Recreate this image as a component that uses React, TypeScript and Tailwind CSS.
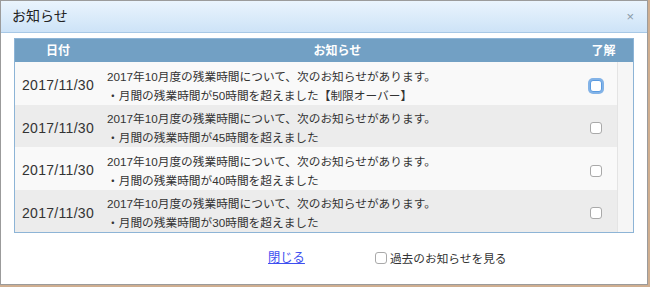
import { useState } from 'react'

const rows = [
  { date: '2017/11/30', hours: '50', extra: '【制限オーバー】' },
  { date: '2017/11/30', hours: '45', extra: '' },
  { date: '2017/11/30', hours: '40', extra: '' },
  { date: '2017/11/30', hours: '30', extra: '' },
]

const font = { fontFamily: '"Liberation Sans", "Noto Sans CJK JP", sans-serif' }

function Check({ focused }: { focused?: boolean }) {
  return (
    <span
      className={`inline-block w-[12px] h-[12px] rounded-[3px] bg-white border ${
        focused ? 'border-[#5b9be0] shadow-[0_0_0_2px_rgba(91,155,224,0.75)]' : 'border-[#a9a9a9]'
      }`}
    />
  )
}

export default function App() {
  const [showPast, setShowPast] = useState(false)

  return (
    <div className="w-[650px] h-[287px] bg-[#cfae90] text-[#333]" style={font}>
      <div className="w-[648px] h-[285px] bg-white border border-[#9b9b9b] flex flex-col">
        {/* Title bar */}
        <div className="h-[32px] flex items-center justify-between px-[11px] bg-gradient-to-b from-[#eaf4fd] to-[#cde3f7] border-b border-[#a7c8e6]">
          <span className="text-[14px] text-[#222]">お知らせ</span>
          <span className="text-[13px] text-[#8a9aa8] leading-none mr-[2px]">×</span>
        </div>

        <div className="px-[13px] pt-[5px] flex-1 flex flex-col">
          {/* Table */}
          <div className="border border-[#8db4d6]">
            <div className="h-[23px] flex items-center bg-[#72a0c4] text-white text-[12px] font-bold">
              <div className="w-[86px] text-center">日付</div>
              <div className="flex-1 text-center">お知らせ</div>
              <div className="w-[59px] text-center">了解</div>
            </div>
            <div className="flex">
              <div className="flex-1">
                {rows.map((r, i) => (
                  <div
                    key={i}
                    className={`h-[42.5px] pt-[5px] flex items-center ${i % 2 === 0 ? 'bg-[#f9f9f9]' : 'bg-[#ececec]'}`}
                  >
                    <div className="w-[86px] text-center text-[14px] tracking-[0.3px]">{r.date}</div>
                    <div className="flex-1 pl-[6px] text-[11.7px] leading-[19px]">
                      <div>2017年10月度の残業時間について、次のお知らせがあります。</div>
                      <div>・月間の残業時間が{r.hours}時間を超えました{r.extra}</div>
                    </div>
                    <div className="w-[42px] flex justify-center">
                      <Check focused={i === 0} />
                    </div>
                  </div>
                ))}
              </div>
              <div className="w-[16px] bg-[#f6f6f6] border-l border-[#e4e4e4]" />
            </div>
          </div>

          {/* Footer */}
          <div className="flex-1 flex items-center">
            <a href="#" className="ml-[254px] text-[12.3px] text-[#3d4ff0] underline">
              閉じる
            </a>
            <label className="ml-[70px] flex items-center gap-[3px] text-[11.7px] cursor-pointer">
              <input
                type="checkbox"
                checked={showPast}
                onChange={() => setShowPast(!showPast)}
                className="sr-only"
              />
              <Check />
              過去のお知らせを見る
            </label>
          </div>
        </div>
      </div>
    </div>
  )
}
